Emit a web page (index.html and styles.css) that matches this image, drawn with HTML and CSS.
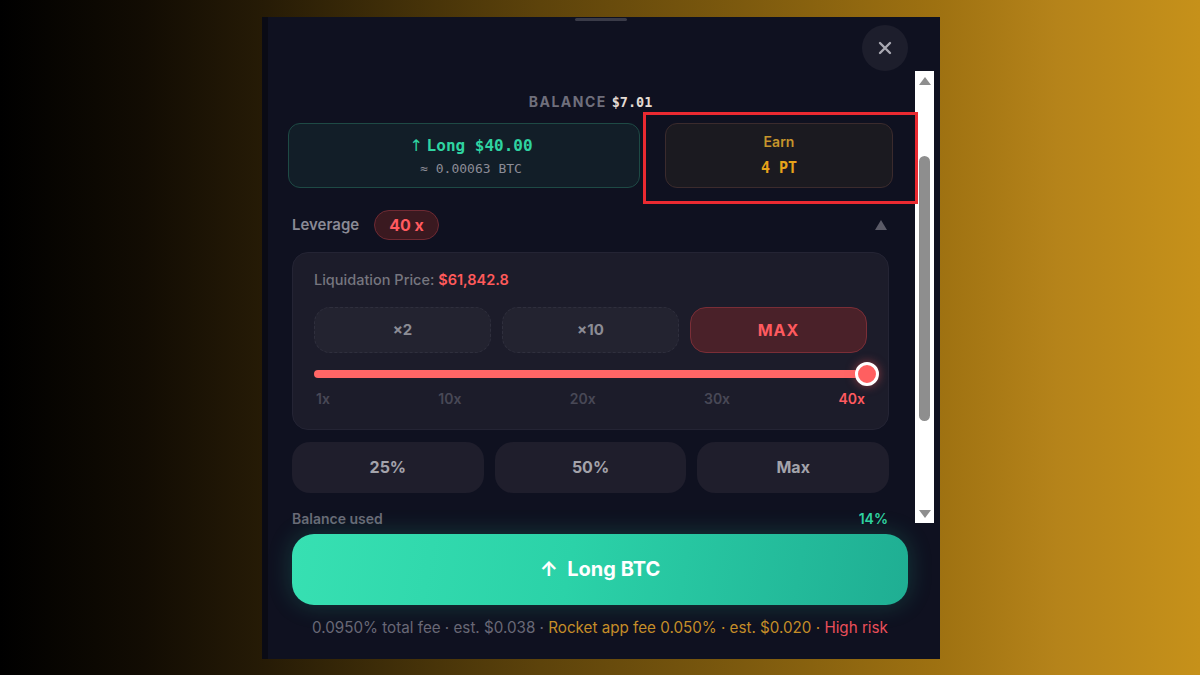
FILE: index.html
```html
<!DOCTYPE html>
<html lang="en">
<head>
  <meta charset="UTF-8">
  <meta name="viewport" content="width=device-width, initial-scale=1.0">
  <title>Long BTC</title>
  <link rel="stylesheet" href="styles.css">
</head>
<body>
  <div class="panel">
    <div class="grab"></div>

    <div class="panel-head">
      <button class="close" aria-label="Close">
        <svg width="14" height="14" viewBox="0 0 14 14"><path d="M2 2L12 12M12 2L2 12" stroke="#a9a9b2" stroke-width="2.4" stroke-linecap="round"/></svg>
      </button>
    </div>

    <div class="scroll">
      <div class="scroll-body">
        <div class="balance">BALANCE <span class="mono">$7.01</span></div>

        <div class="sides">
          <div class="side long">
            <div class="side-main"><span class="arrow">↑</span> <span class="mono">Long $40.00</span></div>
            <div class="side-sub mono">≈ 0.00063 BTC</div>
          </div>
          <div class="side earn">
            <div class="earn-label">Earn</div>
            <div class="earn-value mono">4 PT</div>
          </div>
        </div>

        <div class="lev-head">
          <span class="lev-title">Leverage</span>
          <span class="lev-pill">40 x</span>
          <svg class="caret" width="12" height="10" viewBox="0 0 12 10"><polygon points="6,0 12,10 0,10" fill="#5b5b67"/></svg>
        </div>

        <div class="lev-card">
          <div class="liq">Liquidation Price: <span>$61,842.8</span></div>
          <div class="presets">
            <button class="preset">×2</button>
            <button class="preset">×10</button>
            <button class="preset on">MAX</button>
          </div>
          <div class="slider">
            <div class="track"></div>
            <div class="knob"></div>
          </div>
          <div class="ticks">
            <span>1x</span><span>10x</span><span>20x</span><span>30x</span><span class="on">40x</span>
          </div>
        </div>

        <div class="amounts">
          <button class="amount">25%</button>
          <button class="amount">50%</button>
          <button class="amount">Max</button>
        </div>

        <div class="used">Balance used <span>14%</span></div>
      </div>

      <div class="scrollbar">
        <svg width="12" height="8" viewBox="0 0 12 8"><polygon points="6,0 12,8 0,8" fill="#8e8e8e"/></svg>
        <div class="thumb"></div>
        <svg width="12" height="8" viewBox="0 0 12 8"><polygon points="0,0 12,0 6,8" fill="#8e8e8e"/></svg>
      </div>
    </div>

    <div class="panel-foot">
      <button class="go">↑&nbsp; Long BTC</button>
      <p class="fees">
        <span class="fee-base">0.0950% total fee · est. $0.038 ·</span>
        <span class="fee-app">Rocket app fee 0.050% · est. $0.020 ·</span>
        <span class="fee-risk">High risk</span>
      </p>
    </div>

    <div class="callout"></div>
  </div>
</body>
</html>
```

FILE: styles.css
```css
body {
  margin: 0;
  height: 675px;
  display: flex;
  align-items: center;
  justify-content: center;
  font-family: Inter, 'Noto Sans', sans-serif;
  background: linear-gradient(90deg, #000 0%, #120c03 12%, #261b06 22%, #3e2d08 32%, #5d430b 45%, #7d5a0e 62%, #9e7111 78%, #b5831a 88%, #c6911a 100%);
  overflow: hidden;
}
button {
  font-family: inherit;
  cursor: pointer;
}
.mono {
  font-family: 'DejaVu Sans Mono', 'Liberation Mono', monospace;
}

.panel {
  position: relative;
  width: 678px;
  height: 642px;
  margin-left: 2px;
  background: #0f1120;
  box-shadow: inset 6px 0 0 #0a0b15;
  display: flex;
  flex-direction: column;
}
.grab {
  position: absolute;
  top: 1px;
  left: 313px;
  width: 52px;
  height: 3px;
  border-radius: 2px;
  background: #3a3b48;
}
.panel-head {
  height: 46px;
  padding: 8px 32px 0 0;
  display: flex;
  justify-content: flex-end;
}
.close {
  width: 46px;
  height: 46px;
  border: none;
  border-radius: 50%;
  background: #1d1e2c;
  display: flex;
  align-items: center;
  justify-content: center;
}

/* scrolling middle */
.scroll {
  height: 453px;
  display: flex;
  overflow: hidden;
}
.scroll-body {
  flex: 1;
  padding: 22px 26px 0 30px;
}
.scrollbar {
  width: 19px;
  height: 452px;
  margin-right: 6px;
  background: #fff;
  display: flex;
  flex-direction: column;
  align-items: center;
  padding: 6px 0 5px;
  box-sizing: border-box;
}
.thumb {
  width: 11px;
  height: 265px;
  margin: 71px 0 auto;
  border-radius: 6px;
  background: #8e8e8e;
}

.balance {
  text-align: center;
  font-size: 14px;
  font-weight: 700;
  letter-spacing: 1.5px;
  line-height: 18px;
  color: #6f6f7c;
}
.balance span {
  letter-spacing: 0;
  font-size: 13.5px;
  color: #e4dcd4;
}

.sides {
  display: flex;
  gap: 25px;
  margin: 12px -4px 0;
}
.side {
  height: 65px;
  border-radius: 12px;
  box-sizing: border-box;
  display: flex;
  flex-direction: column;
  align-items: center;
  justify-content: center;
}
.long {
  width: 352px;
  padding-left: 14px;
  background: #121e28;
  border: 1px solid #1e4a45;
}
.side-main {
  font-size: 16px;
  font-weight: 700;
  color: #2fd3a1;
  line-height: 20px;
}
.arrow {
  font-family: 'DejaVu Sans', sans-serif;
  font-weight: 400;
}
.side-sub {
  margin-top: 5px;
  font-size: 13px;
  color: #8c8c96;
}
.earn {
  width: 228px;
  background: #1b1a20;
  border: 1px solid #3b2b2d;
}
.earn-label {
  font-size: 14px;
  font-weight: 600;
  line-height: 17px;
  color: #c6952c;
}
.earn-value {
  margin-top: 9px;
  font-size: 15px;
  font-weight: 700;
  line-height: 18px;
  color: #e6a31a;
}

.lev-head {
  display: flex;
  align-items: center;
  margin-top: 22px;
  height: 30px;
}
.lev-title {
  font-size: 15px;
  font-weight: 600;
  color: #8a8a95;
}
.lev-pill {
  margin-left: 15px;
  padding: 0 14px;
  height: 30px;
  line-height: 28px;
  box-sizing: border-box;
  border-radius: 15px;
  background: #3a1920;
  border: 1px solid #6e2a33;
  color: #ff5a5f;
  font-size: 16px;
  font-weight: 700;
}
.caret {
  margin-left: auto;
  margin-right: 2px;
}

.lev-card {
  margin-top: 12px;
  height: 178px;
  box-sizing: border-box;
  padding: 17px 21px 0;
  background: #1c1c2a;
  border: 1px solid #242434;
  border-radius: 16px;
}
.liq {
  font-size: 14.5px;
  font-weight: 500;
  line-height: 20px;
  color: #76767f;
}
.liq span {
  color: #ff5a5a;
  font-weight: 600;
}
.presets {
  display: flex;
  gap: 11px;
  margin-top: 17px;
}
.preset {
  flex: 1;
  height: 46px;
  border-radius: 16px;
  border: 1px dashed #2f2f3d;
  background: #232330;
  color: #8c8c95;
  font-size: 15px;
  font-weight: 700;
}
.preset.on {
  background: #4a2129;
  border: 1px solid #7a2e37;
  color: #ff5a5f;
  font-size: 16px;
  letter-spacing: 1px;
}
.slider {
  position: relative;
  height: 24px;
  margin-top: 9px;
  display: flex;
  align-items: center;
}
.track {
  flex: 1;
  height: 8px;
  border-radius: 4px;
  background: #ff6666;
}
.knob {
  position: absolute;
  right: -12px;
  top: 0;
  width: 24px;
  height: 24px;
  box-sizing: border-box;
  border-radius: 50%;
  border: 3px solid #fff;
  background: #ff5f60;
  box-shadow: 0 0 10px rgba(255, 90, 90, 0.5);
}
.ticks {
  display: flex;
  justify-content: space-between;
  padding: 0 2px;
  margin-top: 4px;
  font-size: 14px;
  font-weight: 600;
  color: #484856;
}
.ticks .on {
  color: #ff5a5f;
}

.amounts {
  display: flex;
  gap: 11px;
  margin-top: 12px;
}
.amount {
  flex: 1;
  height: 51px;
  border-radius: 18px;
  border: none;
  background: #1f1e2c;
  color: #a3a3ab;
  font-size: 16px;
  font-weight: 700;
}

.used {
  display: flex;
  justify-content: space-between;
  margin-top: 17px;
  font-size: 14px;
  font-weight: 600;
  color: #6a6a76;
}
.used span {
  color: #2fd3a1;
  margin-right: 1px;
}

/* footer */
.panel-foot {
  padding: 10px 32px 0 30px;
}
.go {
  width: 100%;
  height: 71px;
  border: none;
  border-radius: 22px;
  background: linear-gradient(100deg, #37e0b2 0%, #2bd2a8 45%, #1fae93 100%);
  box-shadow: 0 0 24px rgba(40, 210, 165, 0.22);
  color: #fff;
  font-size: 20px;
  font-weight: 700;
}
.fees {
  margin: 13px 0 0;
  text-align: center;
  font-size: 15.2px;
  white-space: nowrap;
}
.fee-base {
  color: #686876;
}
.fee-app {
  color: #c48d28;
}
.fee-risk {
  color: #ea4f5a;
}

.callout {
  position: absolute;
  left: 381px;
  top: 95px;
  width: 275px;
  height: 92px;
  box-sizing: border-box;
  border: 3px solid #ea2a31;
}
```
